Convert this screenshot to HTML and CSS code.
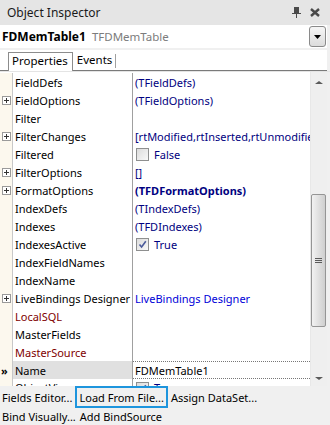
FILE: index.html
```html
<!DOCTYPE html>
<html>
<head>
<meta charset="utf-8">
<link rel="stylesheet" href="styles.css">
</head>
<body>
<div class="window">
  <div class="titlebar">
    <span class="title">Object Inspector</span>
    <span class="tb-icons">
      <svg width="9" height="11" viewBox="0 0 9 11" class="pin"><rect x="2" y="0" width="5" height="6" fill="#4a4a4a"/><rect x="0" y="6" width="9" height="1" fill="#4a4a4a"/><rect x="4" y="7" width="1" height="4" fill="#4a4a4a"/></svg>
      <svg width="10" height="9" viewBox="0 0 10 9" class="close"><path d="M1 1 L9 8 M9 1 L1 8" stroke="#4a4a4a" stroke-width="2.4"/></svg>
    </span>
  </div>
  <div class="combo">
    <span class="obj">FDMemTable1</span>
    <span class="cls">TFDMemTable</span>
    <span class="drop"><svg width="7" height="4" viewBox="0 0 7 4"><path d="M0 0 H7 L3.5 4 Z" fill="#000"/></svg></span>
  </div>
  <div class="strip"></div>
  <div class="tabs">
    <span class="tab active">Properties</span>
    <span class="tab">Events</span>
  </div>
  <div class="gridwrap">
    <div class="grid">
      <div class="row"><span class="gut"></span><span class="nm">FieldDefs</span><span class="vl">(TFieldDefs)</span></div>
      <div class="row"><span class="gut"><i class="plus"></i></span><span class="nm">FieldOptions</span><span class="vl">(TFieldOptions)</span></div>
      <div class="row"><span class="gut"></span><span class="nm">Filter</span><span class="vl"></span></div>
      <div class="row"><span class="gut"><i class="plus"></i></span><span class="nm">FilterChanges</span><span class="vl">[rtModified,rtInserted,rtUnmodified]</span></div>
      <div class="row"><span class="gut"></span><span class="nm">Filtered</span><span class="vl"><i class="chk"></i>False</span></div>
      <div class="row"><span class="gut"><i class="plus"></i></span><span class="nm">FilterOptions</span><span class="vl">[]</span></div>
      <div class="row"><span class="gut"><i class="plus"></i></span><span class="nm">FormatOptions</span><span class="vl bold">(TFDFormatOptions)</span></div>
      <div class="row"><span class="gut"></span><span class="nm">IndexDefs</span><span class="vl">(TIndexDefs)</span></div>
      <div class="row"><span class="gut"></span><span class="nm">Indexes</span><span class="vl">(TFDIndexes)</span></div>
      <div class="row"><span class="gut"></span><span class="nm">IndexesActive</span><span class="vl"><i class="chk on"><svg width="9" height="9" viewBox="0 0 9 9"><path d="M1.5 4.5 L3.6 7 L7.8 1.2" stroke="#4a5a9a" stroke-width="1.6" fill="none"/></svg></i>True</span></div>
      <div class="row"><span class="gut"></span><span class="nm">IndexFieldNames</span><span class="vl"></span></div>
      <div class="row"><span class="gut"></span><span class="nm">IndexName</span><span class="vl"></span></div>
      <div class="row"><span class="gut"><i class="plus"></i></span><span class="nm">LiveBindings Designer</span><span class="vl link">LiveBindings Designer</span></div>
      <div class="row"><span class="gut"></span><span class="nm red">LocalSQL</span><span class="vl"></span></div>
      <div class="row"><span class="gut"></span><span class="nm">MasterFields</span><span class="vl"></span></div>
      <div class="row"><span class="gut"></span><span class="nm red">MasterSource</span><span class="vl"></span></div>
      <div class="row sel"><span class="gut">»</span><span class="nm">Name</span><span class="vl black">FDMemTable1</span></div>
      <div class="row last"><span class="gut"></span><span class="nm">ObjectView</span><span class="vl"><i class="chk on"><svg width="9" height="9" viewBox="0 0 9 9"><path d="M1.5 4.5 L3.6 7 L7.8 1.2" stroke="#4a5a9a" stroke-width="1.6" fill="none"/></svg></i>True</span></div>
    </div>
    <div class="scrollbar">
      <span class="arr up"></span>
      <span class="track"><span class="thumb"><span class="grip"></span></span></span>
      <span class="arr down"></span>
    </div>
  </div>
  <div class="links">
    <div class="lrow"><span class="lk">Fields Editor...</span><span class="lk focus">Load From File...</span><span class="lk">Assign DataSet...</span></div>
    <div class="lrow"><span class="lk">Bind Visually...</span><span class="lk">Add BindSource</span></div>
  </div>
</div>
</body>
</html>
```

FILE: styles.css
```css
* { box-sizing: border-box; }
html, body { margin: 0; padding: 0; }
body {
  width: 330px;
  height: 425px;
  overflow: hidden;
  background: #f0f0f0;
  font-family: "Noto Sans", "Open Sans", sans-serif;
  font-size: 11px;
  color: #000;
}
.window { width: 330px; }
.titlebar {
  height: 25px;
  background: #e5e5e5;
  display: flex;
  align-items: center;
  padding-left: 7px;
  padding-right: 10px;
}
.title { flex: 1; font-size: 12px; color: #1a1a1a; }
.tb-icons { display: flex; align-items: center; gap: 9px; }
.combo {
  height: 23px;
  background: #fff;
  display: flex;
  align-items: center;
  padding-left: 2px;
  width: 327px;
}
.obj { font-weight: bold; font-size: 12px; }
.cls { color: #7c7c7c; margin-left: 6px; flex: 1; font-size: 11.5px; }
.drop {
  width: 17px;
  height: 21px;
  margin-right: 1px;
  border: 1px solid #8a8a8a;
  border-radius: 3px;
  background: linear-gradient(#f6f6f6, #dcdcdc);
  display: flex;
  align-items: center;
  justify-content: center;
}
.strip { height: 2px; background: #f0f0f0; }
.tabs {
  height: 21px;
  background: #fff;
  border-bottom: 1px solid #7a7a7a;
  display: flex;
  align-items: flex-end;
  padding-left: 8px;
  width: 327px;
  font-size: 11.5px;
}
.tab {
  height: 18px;
  line-height: 16px;
  padding: 0 4px 0 3px;
}
.tab.active {
  border: 1px solid #8c8c8c;
  border-bottom: none;
  background: #fff;
  margin-bottom: -1px;
  height: 19px;
}
.tab + .tab { border-right: 1px solid #a0a0a0; height: 14px; line-height: 12px; margin-bottom: 2px; padding-left: 4px; padding-right: 3px; }
.gridwrap {
  display: flex;
  height: 315px;
  overflow: hidden;
  border-top: 1px solid #e4e4e4;
}
.grid { width: 310px; background: #fff; padding-top: 1px; }
.row { display: flex; height: 18px; align-items: stretch; }
.row.last { height: 7px; overflow: hidden; }
.row.last .nm, .row.last .vl { align-items: flex-start; line-height: 18px; height: 7px; overflow: hidden; }
.row.last .chk { margin-top: 3px; }
.gut {
  width: 13px;
  background: #fcf8ee;
  border-right: 1px solid #c8c8c8;
  display: flex;
  align-items: center;
  justify-content: center;
  font-size: 12px;
  line-height: 1;
  color: #000;
}
.plus {
  display: block;
  width: 9px;
  height: 9px;
  border: 1px solid #9a9a9a;
  background: #fff;
  position: relative;
}
.plus::before { content: ""; position: absolute; left: 1px; top: 3px; width: 5px; height: 1px; background: #333; }
.plus::after { content: ""; position: absolute; left: 3px; top: 1px; width: 1px; height: 5px; background: #333; }
.nm {
  width: 120px;
  padding-left: 2px;
  border-right: 1px solid #a0a0a0;
  white-space: nowrap;
  overflow: hidden;
  display: flex;
  align-items: center;
}
.nm.red { color: #800000; }
.vl {
  flex: 1;
  padding-left: 2px;
  white-space: nowrap;
  overflow: hidden;
  color: #000080;
  display: flex;
  align-items: center;
}
.vl.bold { font-weight: bold; }
.vl.link { color: #0000d8; }
.vl.black { color: #000; }
.row.sel .gut { justify-content: flex-start; padding-left: 1px; font-weight: bold; font-size: 11px; }
.row.sel .nm { background: #e0e0e0; }
.row.sel .vl { border-top: 1px dotted #777; border-bottom: 1px dotted #777; }
.chk {
  width: 13px;
  height: 13px;
  flex: none;
  border: 1px solid #8e8f8f;
  background: linear-gradient(135deg, #dcdcdc, #f8f8f8);
  margin-left: 1px;
  margin-right: 5px;
  display: flex;
  align-items: center;
  justify-content: center;
}
.scrollbar {
  width: 17px;
  background: #efefef;
  border-left: 1px solid #e8e8e8;
  display: flex;
  flex-direction: column;
  align-items: center;
}
.arr { width: 0; height: 0; border-left: 4px solid transparent; border-right: 4px solid transparent; }
.arr.up { border-bottom: 3px solid #5a5a5a; margin-top: 9px; }
.arr.down { border-top: 3px solid #5a5a5a; margin-bottom: 6px; }
.track { flex: 1; width: 100%; display: flex; flex-direction: column; padding-top: 110px; }
.thumb {
  height: 133px;
  width: 15px;
  border: 1px solid #959595;
  border-radius: 2px;
  background: linear-gradient(90deg, #f2f2f2, #e0e0e0 50%, #cfcfcf);
  display: flex;
  align-items: center;
  justify-content: center;
}
.grip { width: 7px; height: 5px; border-top: 1px solid #5a5a5a; border-bottom: 1px solid #5a5a5a; position: relative; }
.grip::after { content: ""; position: absolute; left: 0; right: 0; top: 1px; height: 1px; background: #5a5a5a; }
.links { padding-top: 0; }
.lrow { display: flex; height: 17px; align-items: center; }
.lrow:first-child { height: 22px; }
.lk { padding: 0 2px; white-space: nowrap; }
.lk.focus { border: 2px solid #1e95dd; height: 22px; display: flex; align-items: center; padding: 0 2px; margin: 0 1px; }
```
